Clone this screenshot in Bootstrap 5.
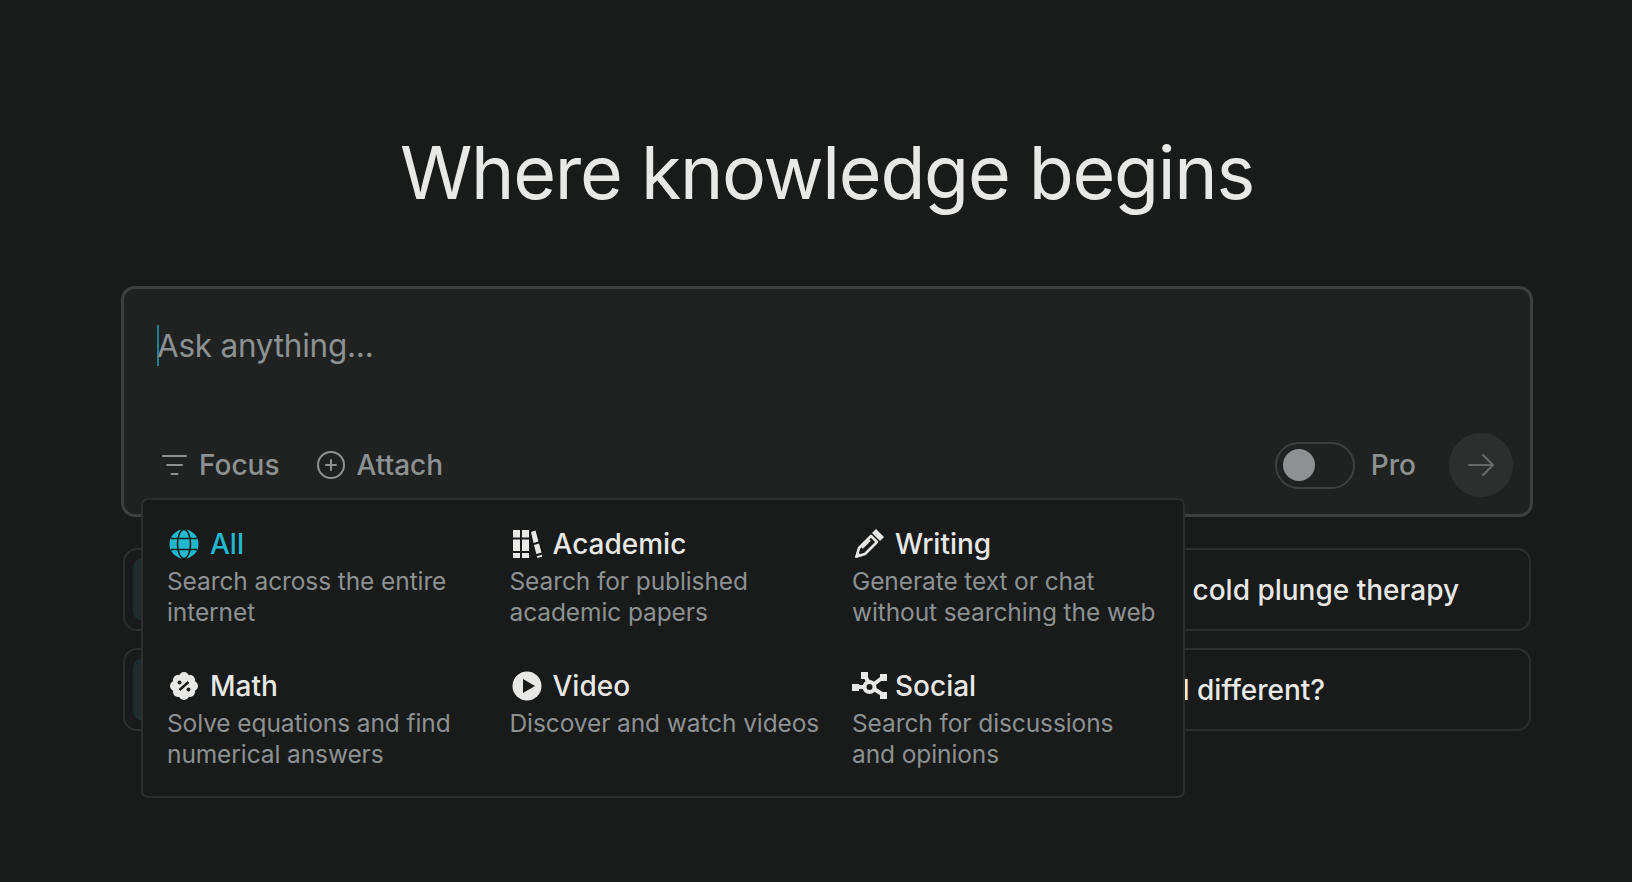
<!DOCTYPE html>
<html lang="en">
<head>
    <meta charset="UTF-8">
    <meta name="viewport" content="width=device-width, initial-scale=1.0">
    <title>Where knowledge begins</title>
    <link href="https://cdn.jsdelivr.net/npm/bootstrap@5.3.0/dist/css/bootstrap.min.css" rel="stylesheet">
    <style>
        html, body { height: 100%; overflow: hidden; }
        body {
            background-color: #191a1a;
            font-family: Inter, "Liberation Sans", Arial, sans-serif;
            color: #e8e8e6;
        }
        .page-wrap { padding: 0 99px 0 121px; }
        .hero-title {
            font-size: 73.5px;
            font-weight: 400;
            line-height: 86px;
            letter-spacing: -1.3px;
            text-align: center;
            margin: 0;
            padding-top: 130px;
            height: 286px;
        }
        .ask-box {
            height: 231px;
            background-color: #202222;
            border: 3.5px solid #3d3f40;
            border-radius: 14px;
            padding: 0 17px 0 33px;
        }
        .ask-input {
            height: 130px;
            padding-top: 36px;
            font-size: 31.5px;
            line-height: 41px;
            letter-spacing: -.25px;
            color: #8d9191;
        }
        .ask-caret { display: inline-block; width: 2px; height: 41px; background-color: #20808d; vertical-align: top; margin-right: -2px; }
        .ask-tool { font-size: 28px; line-height: 36px; font-weight: 500; color: #8d9191; }
        .tool-gap { gap: 12px; }
        .tools-gap { gap: 37px; }
        .filter-icon { margin-left: 5px; }
        .pro-toggle { width: 80px; height: 47px; border: 2px solid #3d3f40; border-radius: 24px; padding-left: 6px; }
        .pro-knob { width: 32px; height: 32px; background-color: #8d9191; border-radius: 50%; }
        .send-btn { width: 64px; height: 64px; background-color: #2d2f2f; border-radius: 50%; margin-left: 33px; }
        .pro-label { margin-left: 16px; }
        .ask-foot { height: 64px; margin-top: 14px; }

        .focus-menu {
            left: 20px;
            top: 212px;
            width: 1044px;
            height: 300px;
            background-color: #191a1a;
            border: 2px solid #2d2f2f;
            border-radius: 7px;
            padding: 14px;
            display: grid;
            grid-template-columns: repeat(3, 329px);
            column-gap: 13.5px;
            z-index: 5;
        }
        .focus-item { padding: 10px 0 10px 10px; height: 142px; }
        .focus-head { font-size: 28px; line-height: 36px; font-weight: 500; color: #e8e8e6; gap: 11px; height: 39px; margin-bottom: 2.5px; padding-left: 2px; }
        .focus-head.is-on { color: #20b8cd; }
        .focus-desc { font-size: 24.5px; line-height: 31.5px; letter-spacing: -.1px; color: #8d9191; margin: 0; }
        .focus-head svg { flex: none; }
        .focus-head .social-icon { margin: 0 -3px 0 -3px; }

        .prompt-grid { display: grid; grid-template-columns: 1fr 1fr; gap: 17px; margin: 31px 2px 0; }
        .prompt-card {
            height: 83px;
            border: 2px solid #2d2f2f;
            border-radius: 14px;
            font-size: 28px;
            line-height: 36px;
            font-weight: 500;
            color: #e8e8e6;
        }
        .prompt-thumb { width: 63px; height: 63px; margin-left: 8px; background-color: #1e2c2e; border-radius: 10px; }
        .prompt-text-a { padding-left: 355px; }
        .prompt-text-b { padding-left: 345px; }
    </style>
</head>
<body>
    <div class="page-wrap">
        <h1 class="hero-title">Where knowledge begins</h1>

        <div class="position-relative">
            <div class="ask-box">
                <div class="ask-input"><span class="ask-caret"></span>Ask anything...</div>
                <div class="ask-foot d-flex align-items-center justify-content-between">
                    <div class="d-flex align-items-center tools-gap ask-tool">
                        <div class="d-flex align-items-center tool-gap">
                            <svg class="filter-icon" width="25" height="22" viewBox="0 0 25 22" fill="none" stroke="#8d9191" stroke-width="2" stroke-linecap="round"><path d="M1 2h23M5 11h15M9.500 20h6"/></svg>
                            <span>Focus</span>
                        </div>
                        <div class="d-flex align-items-center tool-gap">
                            <svg width="28" height="28" viewBox="0 0 28 28" fill="none" stroke="#8d9191" stroke-width="2" stroke-linecap="round"><circle cx="14" cy="14" r="13"/><path d="M14 9v10M9 14h10"/></svg>
                            <span>Attach</span>
                        </div>
                    </div>
                    <div class="d-flex align-items-center ask-tool">
                        <div class="pro-toggle d-flex align-items-center"><div class="pro-knob"></div></div>
                        <span class="pro-label">Pro</span>
                        <div class="send-btn d-flex align-items-center justify-content-center">
                            <svg width="26" height="24" viewBox="0 0 26 24" fill="none" stroke="#646868" stroke-width="2.200" stroke-linecap="round" stroke-linejoin="round"><path d="M1 12h24M15 2l10 10-10 10"/></svg>
                        </div>
                    </div>
                </div>
            </div>

            <div class="focus-menu position-absolute">
                <div class="focus-item">
                    <div class="focus-head is-on d-flex align-items-center">
                        <svg width="30" height="30" viewBox="0 0 30 30"><circle cx="15" cy="15" r="14.500" fill="#20b8cd"/><g fill="none" stroke="#191a1a" stroke-width="1.600"><ellipse cx="15" cy="15" rx="6.500" ry="14.500"/><path d="M2 9.500h26M2 20.500h26"/></g></svg>
                        <span>All</span>
                    </div>
                    <p class="focus-desc">Search across the entire<br>internet</p>
                </div>
                <div class="focus-item">
                    <div class="focus-head d-flex align-items-center">
                        <svg width="30" height="30" viewBox="0 0 30 30" fill="#e8e8e6"><path d="M1 1h7v7.500H1zM1 10.500h7V22H1zM1 24h7v5H1zM10 1h7v7.500h-7zM10 10.500h7V22h-7zM10 24h7v5h-7z"/><path d="M19 3l4.500-1.500 3 11-5 1.500zM22 16l5-1.500 2.500 9-5.200 1.500zM24.800 27.300l5.200-1.500.5 1.800-5.200 1.400z"/></svg>
                        <span>Academic</span>
                    </div>
                    <p class="focus-desc">Search for published<br>academic papers</p>
                </div>
                <div class="focus-item">
                    <div class="focus-head d-flex align-items-center">
                        <svg width="30" height="30" viewBox="0 0 30 30"><path d="M2.500 27.500L5 19 17 7l6 6L11 25z" fill="none" stroke="#e8e8e6" stroke-width="2.600" stroke-linejoin="round"/><path d="M1 29l2-7 5 5zM18 4l4-4 8 8-4 4z" fill="#e8e8e6"/><path d="M8 19l8-8" stroke="#e8e8e6" stroke-width="2.400"/></svg>
                        <span>Writing</span>
                    </div>
                    <p class="focus-desc">Generate text or chat<br>without searching the web</p>
                </div>
                <div class="focus-item">
                    <div class="focus-head d-flex align-items-center">
                        <svg width="30" height="30" viewBox="0 0 30 30"><g fill="#e8e8e6"><circle cx="15" cy="15" r="12"/><circle cx="15" cy="6" r="5"/><circle cx="15" cy="24" r="5"/><circle cx="6" cy="15" r="5"/><circle cx="24" cy="15" r="5"/><circle cx="9" cy="9" r="5"/><circle cx="21" cy="9" r="5"/><circle cx="9" cy="21" r="5"/><circle cx="21" cy="21" r="5"/></g><path d="M19.500 11l-9 8" stroke="#191a1a" stroke-width="2.400"/><circle cx="10.500" cy="11.500" r="2" fill="#191a1a"/><circle cx="19.500" cy="18.500" r="2" fill="#191a1a"/></svg>
                        <span>Math</span>
                    </div>
                    <p class="focus-desc">Solve equations and find<br>numerical answers</p>
                </div>
                <div class="focus-item">
                    <div class="focus-head d-flex align-items-center">
                        <svg width="30" height="30" viewBox="0 0 30 30"><circle cx="15" cy="15" r="14.500" fill="#e8e8e6"/><path d="M11 8l12 7-12 7z" fill="#191a1a"/></svg>
                        <span>Video</span>
                    </div>
                    <p class="focus-desc text-nowrap">Discover and watch videos</p>
                </div>
                <div class="focus-item">
                    <div class="focus-head d-flex align-items-center">
                        <svg class="social-icon" width="36" height="30" viewBox="0 0 36 30" fill="#e8e8e6"><path d="M10 1h7v7h-7zM1 13h7v7H1zM29 3h7v7h-7zM29 21h7v7h-7z"/><path d="M14 5l4 7M5 16h8M31 7l-8 6M31 23l-8-5" stroke="#e8e8e6" stroke-width="4"/><circle cx="18.500" cy="16" r="5" fill="none" stroke="#e8e8e6" stroke-width="4"/></svg>
                        <span>Social</span>
                    </div>
                    <p class="focus-desc">Search for discussions<br>and opinions</p>
                </div>
            </div>
        </div>

        <div class="prompt-grid">
            <div class="prompt-card d-flex align-items-center"><div class="prompt-thumb"></div></div>
            <div class="prompt-card d-flex align-items-center prompt-text-a">cold plunge therapy</div>
            <div class="prompt-card d-flex align-items-center"><div class="prompt-thumb"></div></div>
            <div class="prompt-card d-flex align-items-center prompt-text-b">l different?</div>
        </div>
    </div>

    <script src="https://cdn.jsdelivr.net/npm/bootstrap@5.3.0/dist/js/bootstrap.bundle.min.js"></script>
</body>
</html>
